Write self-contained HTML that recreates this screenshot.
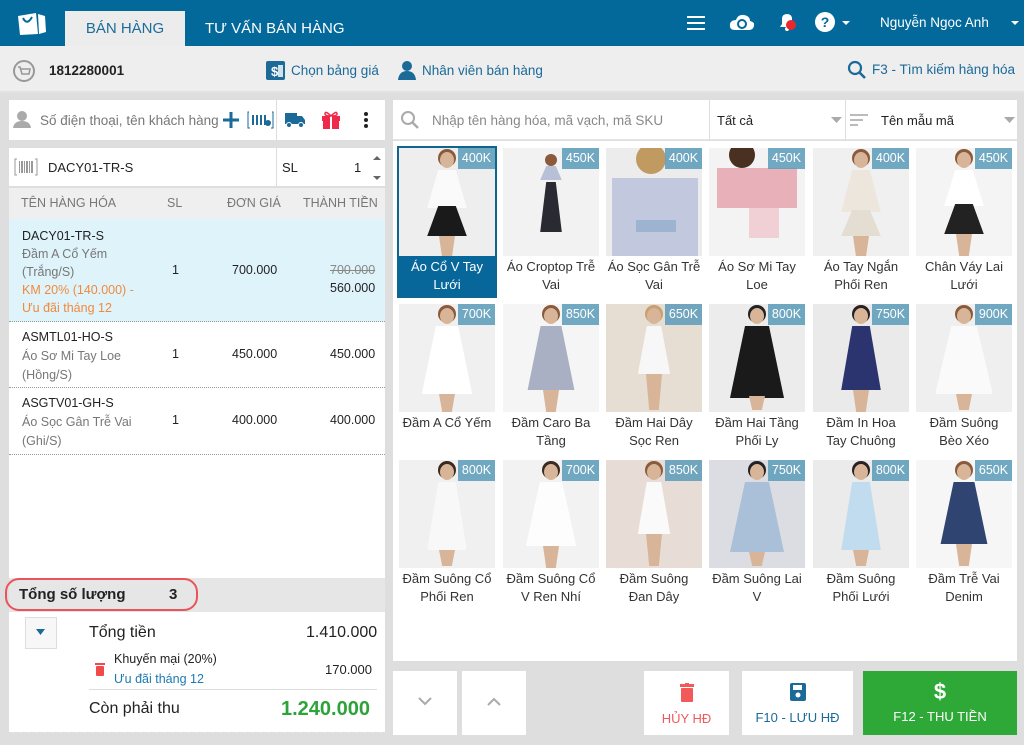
<!DOCTYPE html>
<html><head><meta charset="utf-8">
<style>
*{box-sizing:border-box;margin:0;padding:0}
body{width:1024px;height:745px;overflow:hidden;background:#dedede;font-family:"Liberation Sans","DejaVu Sans",sans-serif;font-size:13px;color:#222;position:relative}
.a{position:absolute}
.top{left:0;top:0;width:1024px;height:46px;background:#03699a}
.tab{left:65px;top:11px;width:120px;height:35px;background:#ececec;color:#1c6d98;font-size:15px;text-align:center;line-height:36px}
.tab2{left:205px;top:11px;color:#fff;font-size:15px;line-height:36px}
.bar{left:0;top:46px;width:1024px;height:47px;background:#eeeeee;border-bottom:2px solid #e2e2e2}
.blue{color:#1b6a98}
.w{background:#fff}
.card{position:absolute;width:96px;height:148px}
.img{position:absolute;left:0;top:0;width:96px;height:108px;overflow:hidden}
.pr{position:absolute;right:0;top:0;width:37px;height:21px;background:rgba(90,155,185,.85);color:#fff;font-size:12.5px;text-align:center;line-height:21px}
.cap{position:absolute;left:-4px;top:108px;width:104px;text-align:center;font-size:13px;line-height:18px;padding-top:2px;color:#333}
.sel{outline:2px solid #0d6590}
.sel .cap{background:#07679a;color:#fff;left:0;width:96px;height:40px}
.hd{position:absolute;width:14px;height:16px;border-radius:50%;background:#d8b598;left:41px;top:4px}
.hair{position:absolute;width:18px;height:18px;border-radius:50%;background:#8a5a3a;left:39px;top:1px}
.dr{position:absolute;left:26px;top:22px;width:44px;height:64px;clip-path:polygon(30% 0,70% 0,95% 100%,5% 100%)}
.lg{position:absolute;left:40px;top:84px;width:16px;height:22px;background:#d8b598;clip-path:polygon(0 0,100% 0,80% 100%,20% 100%)}
.row{position:absolute;left:9px;width:376px;font-size:12.5px}
.sub{color:#777}
.btn{position:absolute;top:671px;height:64px;background:#fff;text-align:center;font-size:13px}
</style></head><body>
<div class="a top"></div>
<svg class="a" style="left:14px;top:10px" width="34" height="26" viewBox="0 0 34 26"><path d="M4 6 L22 3 L24 24 L6 25 Z" fill="#fff"/><path d="M24 4 L31 6 L32 22 L25 24 Z" fill="#fff"/><path d="M9 8 Q13 16 18 7" stroke="#03699a" stroke-width="2" fill="none"/></svg>
<div class="a tab">BÁN HÀNG</div>
<div class="a tab2">TƯ VẤN BÁN HÀNG</div>
<svg class="a" style="left:687px;top:15px" width="20" height="16"><rect y="1" width="18" height="2" fill="#fff"/><rect y="7" width="18" height="2" fill="#fff"/><rect y="13" width="18" height="2" fill="#fff"/></svg>
<svg class="a" style="left:729px;top:13px" width="26" height="18"><path d="M6 17 Q0 17 1 11 Q2 7 7 7 Q9 1 15 2 Q21 3 21 8 Q26 9 25 13 Q24 17 20 17 Z" fill="#fff"/><circle cx="13" cy="11" r="4" stroke="#03699a" stroke-width="2" fill="none"/></svg>
<svg class="a" style="left:777px;top:11px" width="22" height="22"><path d="M3 16 L5 13 L5 8 Q5 3 10 3 Q15 3 15 8 L15 13 L17 16 Z" fill="#fff"/><circle cx="10" cy="18" r="2" fill="#fff"/><circle cx="14" cy="14" r="5" fill="#e8282d"/></svg>
<svg class="a" style="left:815px;top:12px" width="40" height="22"><circle cx="10" cy="10" r="10" fill="#fff"/><text x="10" y="15" font-size="14" font-weight="bold" fill="#03699a" text-anchor="middle" font-family="Liberation Sans">?</text><path d="M27 9 L35 9 L31 13Z" fill="#fff"/></svg>
<div class="a" style="left:880px;top:15px;color:#fff;font-size:13.5px">Nguyễn Ngọc Anh</div>
<svg class="a" style="left:1010px;top:20px" width="12" height="8"><path d="M1 1 L9 1 L5 5Z" fill="#fff"/></svg>

<div class="a bar"></div>
<svg class="a" style="left:12px;top:59px" width="24" height="24"><circle cx="12" cy="12" r="10" fill="none" stroke="#999" stroke-width="2"/><path d="M6 8 L8 8 L10 15 L17 15 L18 10 L9 10" stroke="#999" stroke-width="1.6" fill="none"/></svg>
<div class="a" style="left:49px;top:63px;font-weight:bold;font-size:13.5px">1812280001</div>
<svg class="a" style="left:266px;top:61px" width="19" height="19"><rect width="19" height="19" rx="2" fill="#1b6a98"/><text x="5" y="15" font-size="13" fill="#fff" font-weight="bold" font-family="Liberation Sans">$</text><rect x="12" y="4" width="5" height="12" fill="#fff" opacity=".8"/></svg>
<div class="a blue" style="left:291px;top:63px;font-size:13.5px">Chọn bảng giá</div>
<svg class="a" style="left:398px;top:60px" width="18" height="20"><circle cx="9" cy="6" r="5" fill="#1b6a98"/><path d="M0 20 Q1 11 9 11 Q17 11 18 20Z" fill="#1b6a98"/></svg>
<div class="a blue" style="left:422px;top:63px;font-size:13.5px">Nhân viên bán hàng</div>
<svg class="a" style="left:847px;top:60px" width="20" height="20"><circle cx="8" cy="8" r="6" fill="none" stroke="#1b6a98" stroke-width="2.2"/><path d="M12 12 L18 18" stroke="#1b6a98" stroke-width="2.6"/></svg>
<div class="a blue" style="left:872px;top:62px;font-size:13.5px">F3 - Tìm kiếm hàng hóa</div>

<!-- left panel -->
<div class="a w" style="left:9px;top:100px;width:376px;height:40px"></div>
<div class="a" style="left:276px;top:100px;width:1px;height:40px;background:#ddd"></div>
<svg class="a" style="left:13px;top:111px" width="18" height="18"><circle cx="9" cy="5" r="5" fill="#aaa"/><path d="M0 17 Q1 10 9 10 Q17 10 18 17Z" fill="#aaa"/></svg>
<div class="a" style="left:40px;top:113px;color:#777;font-size:13.5px">Số điện thoại, tên khách hàng</div>
<svg class="a" style="left:222px;top:111px" width="18" height="18"><path d="M9 1 V17 M1 9 H17" stroke="#1b6a98" stroke-width="3"/></svg>
<svg class="a" style="left:247px;top:111px" width="27" height="18"><path d="M2 1 H1 V17 H3 M25 1 H26 V17 H24" stroke="#1b6a98" fill="none"/><rect x="5" y="4" width="2" height="10" fill="#1b6a98"/><rect x="9" y="4" width="2" height="10" fill="#1b6a98"/><rect x="13" y="4" width="2" height="10" fill="#1b6a98"/><rect x="17" y="4" width="2" height="10" fill="#1b6a98"/><circle cx="21" cy="12" r="3" fill="#1b6a98"/></svg>
<svg class="a" style="left:285px;top:112px" width="20" height="16"><rect x="0" y="1" width="12" height="11" fill="#1b6a98"/><path d="M12 4 H17 L20 8 V12 H12Z" fill="#1b6a98"/><circle cx="4" cy="13" r="2.5" fill="#1b6a98" stroke="#fff"/><circle cx="16" cy="13" r="2.5" fill="#1b6a98" stroke="#fff"/></svg>
<svg class="a" style="left:321px;top:110px" width="20" height="19"><rect x="1" y="6" width="18" height="5" fill="#f0284a"/><rect x="2" y="11" width="16" height="8" fill="#f0284a"/><rect x="9" y="6" width="2" height="13" fill="#fff"/><path d="M10 6 Q4 0 4 4 Q4 6 10 6 Q16 6 16 4 Q16 0 10 6" stroke="#f0284a" stroke-width="1.5" fill="none"/></svg>
<svg class="a" style="left:363px;top:111px" width="6" height="19"><circle cx="3" cy="3" r="2" fill="#222"/><circle cx="3" cy="9" r="2" fill="#222"/><circle cx="3" cy="15" r="2" fill="#222"/></svg>

<div class="a w" style="left:9px;top:148px;width:376px;height:39px;border-bottom:1px solid #ddd"></div>
<div class="a" style="left:276px;top:148px;width:1px;height:39px;background:#ddd"></div>
<svg class="a" style="left:14px;top:158px" width="24" height="18"><path d="M3 1 H1 V17 H3 M21 1 H23 V17 H21" stroke="#999" fill="none"/><g fill="#999"><rect x="5" y="3" width="1" height="12"/><rect x="7" y="3" width="2" height="12"/><rect x="10" y="3" width="1" height="12"/><rect x="12" y="3" width="2" height="12"/><rect x="15" y="3" width="1" height="12"/><rect x="17" y="3" width="2" height="12"/></g></svg>
<div class="a" style="left:48px;top:160px;font-size:13px">DACY01-TR-S</div>
<div class="a" style="left:282px;top:160px;font-size:13px">SL</div>
<div class="a" style="left:354px;top:160px;font-size:13px">1</div>
<svg class="a" style="left:372px;top:154px" width="10" height="28"><path d="M1 6 L9 6 L5 2Z M1 22 L9 22 L5 26Z" fill="#666"/></svg>

<div class="a" style="left:9px;top:188px;width:376px;height:31px;background:#efefef;color:#777;font-size:12.5px">
<span class="a" style="left:12px;top:8px">TÊN HÀNG HÓA</span><span class="a" style="left:158px;top:8px">SL</span><span class="a" style="left:218px;top:8px">ĐƠN GIÁ</span><span class="a" style="left:294px;top:8px">THÀNH TIỀN</span></div>
<div class="a w" style="left:9px;top:219px;width:376px;height:359px"></div>
<div class="row" style="top:219px;height:103px;background:#dff3fb;border-bottom:1px dotted #999">
<div class="a" style="left:13px;top:8px;line-height:18px;font-size:12.5px">DACY01-TR-S<br><span class="sub">Đầm A Cổ Yếm<br>(Trắng/S)</span><br><span style="color:#f08a3c">KM 20% (140.000) -<br>Ưu đãi tháng 12</span></div>
<div class="a" style="left:163px;top:44px">1</div><div class="a" style="left:223px;top:44px">700.000</div>
<div class="a" style="left:321px;top:44px;color:#888;text-decoration:line-through">700.000</div><div class="a" style="left:321px;top:62px">560.000</div></div>
<div class="row" style="top:322px;height:66px;border-bottom:1px dotted #999">
<div class="a" style="left:13px;top:6px;line-height:19px">ASMTL01-HO-S<br><span class="sub">Áo Sơ Mi Tay Loe<br>(Hồng/S)</span></div>
<div class="a" style="left:163px;top:25px">1</div><div class="a" style="left:223px;top:25px">450.000</div><div class="a" style="left:321px;top:25px">450.000</div></div>
<div class="row" style="top:388px;height:67px;border-bottom:1px dotted #999">
<div class="a" style="left:13px;top:6px;line-height:19px">ASGTV01-GH-S<br><span class="sub">Áo Sọc Gân Trễ Vai<br>(Ghi/S)</span></div>
<div class="a" style="left:163px;top:25px">1</div><div class="a" style="left:223px;top:25px">400.000</div><div class="a" style="left:321px;top:25px">400.000</div></div>

<div class="a" style="left:9px;top:578px;width:376px;height:34px;background:#e6e6e6"></div>
<div class="a" style="left:5px;top:578px;width:193px;height:33px;border:2px solid #e8545a;border-radius:14px"></div>
<div class="a" style="left:19px;top:586px;font-size:15px;font-weight:bold">Tổng số lượng</div>
<div class="a" style="left:169px;top:586px;font-size:15px;font-weight:bold">3</div>
<div class="a w" style="left:9px;top:612px;width:376px;height:120px"></div>
<svg class="a" style="left:9px;top:727px" width="376" height="8"><defs><pattern id="z" width="8" height="8" patternUnits="userSpaceOnUse"><path d="M0 0 L8 0 L4 6Z" fill="#fff"/></pattern></defs><rect width="376" height="8" fill="url(#z)"/></svg>
<div class="a" style="left:25px;top:617px;width:32px;height:32px;border:1px solid #ddd;background:#f7f7f7"></div>
<svg class="a" style="left:36px;top:629px" width="10" height="8"><path d="M0 0 L9 0 L4.5 6Z" fill="#1b6a98"/></svg>
<div class="a" style="left:89px;top:624px;font-size:16px">Tổng tiền</div>
<div class="a" style="left:306px;top:624px;font-size:16px">1.410.000</div>
<svg class="a" style="left:95px;top:662px" width="10" height="14"><rect x="0" y="1" width="10" height="2" fill="#f04a4a"/><rect x="1" y="4" width="8" height="10" rx="1" fill="#f04a4a"/></svg>
<div class="a" style="left:114px;top:652px;font-size:12.5px">Khuyến mại (20%)</div>
<div class="a" style="left:114px;top:672px;font-size:12.5px;color:#1b7ab0">Ưu đãi tháng 12</div>
<div class="a" style="left:325px;top:662px;font-size:13px">170.000</div>
<div class="a" style="left:89px;top:689px;width:288px;height:1px;background:#ddd"></div>
<div class="a" style="left:89px;top:700px;font-size:16px">Còn phải thu</div>
<div class="a" style="left:281px;top:698px;font-size:20px;font-weight:bold;color:#2ea33a">1.240.000</div>

<!-- right -->
<div class="a w" style="left:393px;top:100px;width:624px;height:40px;border-bottom:1px solid #e5e5e5"></div>
<svg class="a" style="left:400px;top:110px" width="20" height="20"><circle cx="8" cy="8" r="6" fill="none" stroke="#aaa" stroke-width="2"/><path d="M12 12 L18 18" stroke="#aaa" stroke-width="2.4"/></svg>
<div class="a" style="left:432px;top:113px;color:#888;font-size:13.5px">Nhập tên hàng hóa, mã vạch, mã SKU</div>
<div class="a" style="left:709px;top:100px;width:1px;height:40px;background:#ddd"></div>
<div class="a" style="left:845px;top:100px;width:1px;height:40px;background:#ddd"></div>
<div class="a" style="left:717px;top:113px;font-size:13px">Tất cả</div>
<svg class="a" style="left:831px;top:117px" width="12" height="7"><path d="M0 0 L11 0 L5.5 6Z" fill="#aaa"/></svg>
<svg class="a" style="left:850px;top:114px" width="18" height="13"><rect width="18" height="2" fill="#bbb"/><rect y="5" width="13" height="2" fill="#bbb"/><rect y="10" width="8" height="2" fill="#bbb"/></svg>
<div class="a" style="left:881px;top:113px;font-size:13px">Tên mẫu mã</div>
<svg class="a" style="left:1004px;top:117px" width="12" height="7"><path d="M0 0 L11 0 L5.5 6Z" fill="#aaa"/></svg>
<div class="a w" style="left:393px;top:141px;width:624px;height:520px"></div>

<!-- cards row1 -->
<div class="card sel" style="left:399px;top:148px"><div class="img" style="background:#eeeeee"><div class="hair"></div><div class="hd"></div><div class="dr" style="background:#fafafa;height:38px"></div><div class="dr" style="top:58px;height:30px;background:#1a1a1a"></div><div class="lg" style="top:88px"></div></div><div class="pr">400K</div><div class="cap">Áo Cổ V Tay<br>Lưới</div></div>
<div class="card" style="left:503px;top:148px"><div class="img" style="background:#f2f2f2"><div class="hair" style="width:12px;height:12px;left:42px;top:6px"></div><div class="dr" style="left:36px;top:18px;width:24px;height:14px;background:#b8c0d8"></div><div class="dr" style="left:36px;top:34px;width:24px;height:50px;background:#2a2a32"></div></div><div class="pr">450K</div><div class="cap">Áo Croptop Trễ<br>Vai</div></div>
<div class="card" style="left:606px;top:148px"><div class="img" style="background:#ececec"><div class="hair" style="left:30px;top:-4px;width:30px;height:30px;background:#c09a60"></div><div class="dr" style="left:6px;top:30px;width:86px;height:78px;background:#c2c8de;clip-path:none"></div><div class="a" style="left:30px;top:72px;width:40px;height:12px;background:#9cb4d0"></div></div><div class="pr">400K</div><div class="cap">Áo Sọc Gân Trễ<br>Vai</div></div>
<div class="card" style="left:709px;top:148px"><div class="img" style="background:#f3f3f3"><div class="hair" style="left:20px;top:-6px;width:26px;height:26px;background:#4a3020"></div><div class="dr" style="left:8px;top:20px;width:80px;height:40px;background:#e8b0b8;clip-path:none"></div><div class="a" style="left:40px;top:60px;width:30px;height:30px;background:#f0d0d4"></div></div><div class="pr">450K</div><div class="cap">Áo Sơ Mi Tay<br>Loe</div></div>
<div class="card" style="left:813px;top:148px"><div class="img" style="background:#f0f0f0"><div class="hair"></div><div class="hd"></div><div class="dr" style="background:#ede6dc;height:42px"></div><div class="dr" style="top:62px;height:26px;background:#e4ddd2"></div><div class="lg" style="top:88px"></div></div><div class="pr">400K</div><div class="cap">Áo Tay Ngắn<br>Phối Ren</div></div>
<div class="card" style="left:916px;top:148px"><div class="img" style="background:#f4f4f4"><div class="hair"></div><div class="hd"></div><div class="dr" style="background:#fff;height:36px"></div><div class="dr" style="top:56px;height:30px;background:#222"></div><div class="lg" style="top:86px"></div></div><div class="pr">450K</div><div class="cap">Chân Váy Lai<br>Lưới</div></div>
<!-- row2 -->
<div class="card" style="left:399px;top:304px"><div class="img" style="background:#f0f0f0"><div class="hair"></div><div class="hd"></div><div class="dr" style="background:#fff;height:68px;left:20px;width:56px;box-shadow:0 0 0 1px #ddd"></div><div class="lg" style="top:90px;height:18px"></div></div><div class="pr">700K</div><div class="cap">Đầm A Cổ Yếm</div></div>
<div class="card" style="left:503px;top:304px"><div class="img" style="background:#f5f5f5"><div class="hair"></div><div class="hd"></div><div class="dr" style="background:#a9b0c4;height:64px;left:22px;width:52px"></div><div class="lg" style="top:86px"></div></div><div class="pr">850K</div><div class="cap">Đầm Caro Ba<br>Tầng</div></div>
<div class="card" style="left:606px;top:304px"><div class="img" style="background:#e6ddd3"><div class="hair" style="background:#c8a070"></div><div class="hd"></div><div class="dr" style="background:#f7f7f7;height:48px;left:30px;width:36px"></div><div class="lg" style="top:70px;height:36px"></div></div><div class="pr">650K</div><div class="cap">Đầm Hai Dây<br>Sọc Ren</div></div>
<div class="card" style="left:709px;top:304px"><div class="img" style="background:#ececec"><div class="hair" style="background:#222"></div><div class="hd"></div><div class="dr" style="background:#1a1a1a;height:72px;left:18px;width:60px"></div><div class="lg" style="top:92px;height:14px"></div></div><div class="pr">800K</div><div class="cap">Đầm Hai Tầng<br>Phối Ly</div></div>
<div class="card" style="left:813px;top:304px"><div class="img" style="background:#eaeaea"><div class="hair" style="background:#2a2020"></div><div class="hd"></div><div class="dr" style="background:#2c3470;height:64px"></div><div class="lg" style="top:86px"></div></div><div class="pr">750K</div><div class="cap">Đầm In Hoa<br>Tay Chuông</div></div>
<div class="card" style="left:916px;top:304px"><div class="img" style="background:#efefef"><div class="hair"></div><div class="hd"></div><div class="dr" style="background:#fafafa;height:68px;left:16px;width:64px;box-shadow:0 0 0 1px #ccc"></div><div class="lg" style="top:90px;height:16px"></div></div><div class="pr">900K</div><div class="cap">Đầm Suông<br>Bèo Xéo</div></div>
<!-- row3 -->
<div class="card" style="left:399px;top:460px"><div class="img" style="background:#f0f0f0"><div class="hair" style="background:#3a2a20"></div><div class="hd"></div><div class="dr" style="background:#f8f8f8;height:68px;box-shadow:0 0 0 1px #888"></div><div class="lg" style="top:90px;height:16px"></div></div><div class="pr">800K</div><div class="cap">Đầm Suông Cổ<br>Phối Ren</div></div>
<div class="card" style="left:503px;top:460px"><div class="img" style="background:#f2f2f2"><div class="hair" style="background:#3a2a20"></div><div class="hd"></div><div class="dr" style="background:#fdfdfd;height:64px;left:20px;width:56px;box-shadow:0 0 0 1px #ddd"></div><div class="lg" style="top:86px"></div></div><div class="pr">700K</div><div class="cap">Đầm Suông Cổ<br>V Ren Nhí</div></div>
<div class="card" style="left:606px;top:460px"><div class="img" style="background:#e7ddd6"><div class="hair"></div><div class="hd"></div><div class="dr" style="background:#fafafa;height:52px;left:30px;width:36px"></div><div class="lg" style="top:74px;height:32px"></div></div><div class="pr">850K</div><div class="cap">Đầm Suông<br>Đan Dây</div></div>
<div class="card" style="left:709px;top:460px"><div class="img" style="background:#dcdde3"><div class="hair" style="background:#222"></div><div class="hd"></div><div class="dr" style="background:#a9c0d8;height:70px;left:18px;width:60px"></div><div class="lg" style="top:92px;height:14px"></div></div><div class="pr">750K</div><div class="cap">Đầm Suông Lai<br>V</div></div>
<div class="card" style="left:813px;top:460px"><div class="img" style="background:#ebebeb"><div class="hair" style="background:#2a2020"></div><div class="hd"></div><div class="dr" style="background:#c2dcef;height:68px"></div><div class="lg" style="top:90px;height:16px"></div></div><div class="pr">800K</div><div class="cap">Đầm Suông<br>Phối Lưới</div></div>
<div class="card" style="left:916px;top:460px"><div class="img" style="background:#f6f6f6"><div class="hair"></div><div class="hd"></div><div class="dr" style="background:#2f4470;height:62px;left:22px;width:52px"></div><div class="lg" style="top:84px"></div></div><div class="pr">650K</div><div class="cap">Đầm Trễ Vai<br>Denim</div></div>

<!-- bottom buttons -->
<div class="btn" style="left:393px;width:64px"><svg style="margin-top:26px" width="14" height="9"><path d="M1 1 L7 7 L13 1" stroke="#aaa" stroke-width="2" fill="none"/></svg></div>
<div class="btn" style="left:462px;width:64px"><svg style="margin-top:26px" width="14" height="9"><path d="M1 8 L7 2 L13 8" stroke="#aaa" stroke-width="2" fill="none"/></svg></div>
<div class="btn" style="left:644px;width:85px;color:#f25a5a"><svg style="margin-top:12px" width="14" height="19"><rect x="0" y="1" width="14" height="3" fill="#f25a5a"/><rect x="5" y="0" width="4" height="2" fill="#f25a5a"/><rect x="1" y="5" width="12" height="14" rx="1" fill="#f25a5a"/></svg><div style="margin-top:6px">HỦY HĐ</div></div>
<div class="btn" style="left:742px;width:111px;color:#1b6a98"><svg style="margin-top:12px" width="16" height="18"><rect width="16" height="18" rx="2" fill="#1b6a98"/><rect x="3" y="2" width="9" height="5" fill="#fff"/><circle cx="8" cy="12" r="2.5" fill="#fff"/></svg><div style="margin-top:6px">F10 - LƯU HĐ</div></div>
<div class="btn" style="left:863px;width:154px;background:#2ea836;color:#fff"><div style="font-size:22px;font-weight:bold;margin-top:8px">$</div><div style="margin-top:4px">F12 - THU TIỀN</div></div>
</body></html>
